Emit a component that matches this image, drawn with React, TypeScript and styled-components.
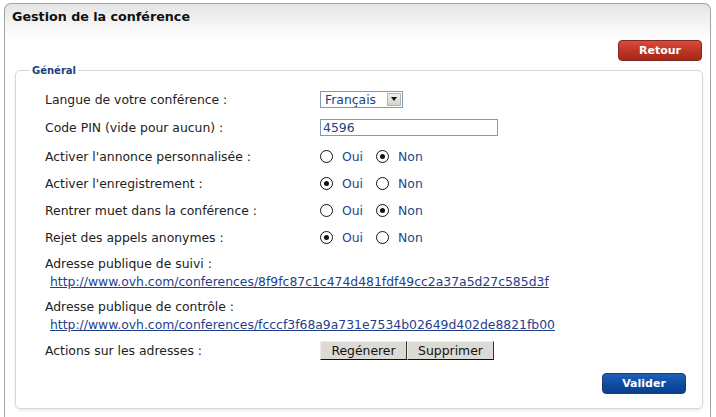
import React from "react";
import styled, { createGlobalStyle } from "styled-components";

const Global = createGlobalStyle`
  html, body { margin: 0; padding: 0; background: #fff; }
  body { font-family: "DejaVu Sans", Verdana, sans-serif; font-size: 12.4px; color: #222; }
`;

const Panel = styled.div`
  margin: 3px 5px 0 4px;
  height: 414px;
  box-sizing: border-box;
  border: 1px solid #a3a3a3;
  border-bottom: none;
  border-radius: 7px 7px 0 0;
  background: linear-gradient(#e4e4e4 0px, #f6f6f6 22px, #ffffff 36px);
`;

const Title = styled.h1`
  margin: 0;
  padding: 5px 0 0 7px;
  height: 31px;
  box-sizing: border-box;
  font-size: 12.7px;
  font-weight: bold;
  color: #111;
  font-family: "DejaVu Sans", Verdana, sans-serif;
`;

const Toolbar = styled.div`
  display: flex;
  justify-content: flex-end;
  padding: 5px 8px 0 0;
  height: 30px;
  box-sizing: border-box;
`;

const ColorButton = styled.button<{ $tone: "red" | "blue" }>`
  width: 84px;
  height: 21px;
  border-radius: 4px;
  border: 1px solid ${(p) => (p.$tone === "red" ? "#7a2a20" : "#233a66")};
  background: ${(p) =>
    p.$tone === "red"
      ? "linear-gradient(#dc4a3c, #b83222 60%, #a52818)"
      : "linear-gradient(#1f5fb6, #0c4a9e 60%, #093f8c)"};
  color: #fff;
  font-family: "DejaVu Sans", Verdana, sans-serif;
  font-weight: bold;
  font-size: 11px;
  padding: 0;
  cursor: pointer;
`;

const Fieldset = styled.fieldset`
  margin: 0 7px 0 10px;
  padding: 9px 16px 14px 29px;
  border: 1px solid #d4d7de;
  border-radius: 5px;
  box-shadow: 0 2px 3px rgba(0, 0, 0, 0.08);
  background: #fff;
  min-width: 0;
`;

const Legend = styled.legend`
  margin-left: -15px;
  padding: 0 2px;
  font-weight: bold;
  font-size: 10px;
  color: #1c3f82;
  font-family: "DejaVu Sans", Verdana, sans-serif;
`;

const Row = styled.div<{ $h: number; $top?: number }>`
  display: grid;
  grid-template-columns: 275px 1fr;
  align-items: center;
  height: ${(p) => p.$h}px;
  margin-top: ${(p) => p.$top ?? 0}px;
`;

const Label = styled.span`
  color: #222;
  white-space: nowrap;
`;

const Controls = styled.div`
  display: flex;
  align-items: center;
`;

const SelectBox = styled.div`
  display: flex;
  align-items: center;
  width: 83px;
  height: 17px;
  box-sizing: border-box;
  border: 1px solid #7d9cbd;
  padding-left: 4px;
  color: #1c3f82;
  justify-content: space-between;
`;

const SelectArrow = styled.span`
  width: 14px;
  height: 13px;
  margin-right: 1px;
  box-sizing: border-box;
  border: 1px solid #b5b3ad;
  background: linear-gradient(#f0efec, #d4d2cc);
  display: flex;
  align-items: center;
  justify-content: center;
  &::after {
    content: "";
    border-left: 3px solid transparent;
    border-right: 3px solid transparent;
    border-top: 4px solid #111;
  }
`;

const TextInput = styled.input`
  width: 178px;
  height: 17px;
  box-sizing: border-box;
  border: 1px solid #7d9cbd;
  padding: 0 2px;
  margin: 0;
  font-family: "DejaVu Sans", Verdana, sans-serif;
  font-size: 12.4px;
  color: #1c3f82;
  outline: none;
`;

const RadioLabel = styled.label`
  display: inline-flex;
  align-items: center;
  color: #24468a;
  margin-right: 13px;
`;

const Radio = styled.input`
  appearance: none;
  width: 13px;
  height: 13px;
  margin: 0 9px 0 0;
  border: 1px solid #111;
  border-radius: 50%;
  background: #fff;
  display: inline-grid;
  place-content: center;
  &:checked::before {
    content: "";
    width: 5px;
    height: 5px;
    border-radius: 50%;
    background: #111;
  }
`;

const AddressBlock = styled.div<{ $gap: number }>`
  margin-top: ${(p) => p.$gap}px;
  line-height: 18px;
`;

const LinkLine = styled.div`
  padding-left: 5px;
`;

const Link = styled.a`
  color: #1f3f8c;
  text-decoration: underline;
`;

const GrayButton = styled.button`
  height: 19px;
  width: 87px;
  padding: 0;
  margin: 0;
  box-sizing: border-box;
  background: #dcdad5;
  border-top: 1px solid #eeece8;
  border-left: 1px solid #eeece8;
  border-right: 1px solid #333;
  border-bottom: 1px solid #111;
  font-family: "DejaVu Sans", Verdana, sans-serif;
  font-size: 12.4px;
  color: #111;
`;

const Footer = styled.div`
  display: flex;
  justify-content: flex-end;
  padding-top: 10px;
`;

type YesNo = "oui" | "non";

const YesNoRadios: React.FC<{ name: string; value: YesNo }> = ({ name, value }) => (
  <Controls>
    <RadioLabel>
      <Radio type="radio" name={name} defaultChecked={value === "oui"} />
      Oui
    </RadioLabel>
    <RadioLabel>
      <Radio type="radio" name={name} defaultChecked={value === "non"} />
      Non
    </RadioLabel>
  </Controls>
);

export default function App() {
  return (
    <>
      <Global />
      <Panel>
        <Title>Gestion de la conférence</Title>
        <Toolbar>
          <ColorButton $tone="red">Retour</ColorButton>
        </Toolbar>
        <Fieldset>
          <Legend>Général</Legend>
          <Row $h={28}>
            <Label>Langue de votre conférence :</Label>
            <Controls>
              <SelectBox>
                Français
                <SelectArrow />
              </SelectBox>
            </Controls>
          </Row>
          <Row $h={28}>
            <Label>Code PIN (vide pour aucun) :</Label>
            <Controls>
              <TextInput defaultValue="4596" />
            </Controls>
          </Row>
          <Row $h={27} $top={2}>
            <Label>Activer l'annonce personnalisée :</Label>
            <YesNoRadios name="annonce" value="non" />
          </Row>
          <Row $h={27}>
            <Label>Activer l'enregistrement :</Label>
            <YesNoRadios name="enreg" value="oui" />
          </Row>
          <Row $h={27}>
            <Label>Rentrer muet dans la conférence :</Label>
            <YesNoRadios name="muet" value="non" />
          </Row>
          <Row $h={27}>
            <Label>Rejet des appels anonymes :</Label>
            <YesNoRadios name="rejet" value="oui" />
          </Row>
          <AddressBlock $gap={4}>
            <Label>Adresse publique de suivi :</Label>
            <LinkLine>
              <Link href="#">http://www.ovh.com/conferences/8f9fc87c1c474d481fdf49cc2a37a5d27c585d3f</Link>
            </LinkLine>
          </AddressBlock>
          <AddressBlock $gap={7}>
            <Label>Adresse publique de contrôle :</Label>
            <LinkLine>
              <Link href="#">http://www.ovh.com/conferences/fcccf3f68a9a731e7534b02649d402de8821fb00</Link>
            </LinkLine>
          </AddressBlock>
          <Row $h={26} $top={3}>
            <Label>Actions sur les adresses :</Label>
            <Controls>
              <GrayButton>Regénerer</GrayButton>
              <GrayButton>Supprimer</GrayButton>
            </Controls>
          </Row>
          <Footer>
            <ColorButton $tone="blue">Valider</ColorButton>
          </Footer>
        </Fieldset>
      </Panel>
    </>
  );
}
